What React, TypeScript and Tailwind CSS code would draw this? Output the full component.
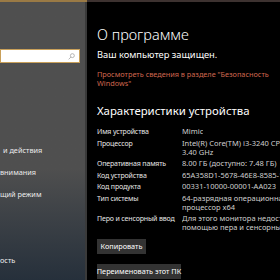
import React from "react";

const rows: { label: string; value: string[] }[] = [
  { label: "Имя устройства", value: ["Mimic"] },
  { label: "Процессор", value: ["Intel(R) Core(TM) i3-3240 CPU @ 3.40GHz", "3.40 GHz"] },
  { label: "Оперативная память", value: ["8.00 ГБ (доступно: 7.48 ГБ)"] },
  { label: "Код устройства", value: ["65A358D1-5678-46E8-8585-1614E0A2C1F3"] },
  { label: "Код продукта", value: ["00331-10000-00001-AA023"] },
  { label: "Тип системы", value: ["64-разрядная операционная система,", "процессор x64"] },
  {
    label: "Перо и сенсорный ввод",
    value: ["Для этого монитора недоступен ввод с", "помощью пера и сенсорный ввод."],
  },
];

export default function App() {
  return (
    <div className="w-[280px] h-[280px] overflow-hidden bg-black flex flex-col font-['Noto_Sans',sans-serif]">
      <div className="flex h-[2px] shrink-0">
        <div className="w-[87px] bg-[#9a7a45]" />
        <div className="flex-1 bg-[#3d3230]" />
      </div>
      <div className="flex flex-1 min-h-0">
        <aside className="w-[87px] shrink-0 overflow-hidden bg-linear-to-b from-[#4f4f4f] from-60% to-[#26303b] border-r-[2px] border-[#3a3a3a] flex flex-col">
          <div className="mt-[47px] w-[80px] h-[14px] bg-white border border-[#c9a05a] flex items-center justify-end pr-[4px]">
            <svg width="7" height="7" viewBox="0 0 16 16" fill="none" stroke="#9a9a9a" strokeWidth="1.6">
              <circle cx="10" cy="6" r="4.5" />
              <path d="M6.8 9.2 L1.5 14.5" />
            </svg>
          </div>
          <div className="mt-[83px] flex flex-col text-[7.3px] leading-[9px] text-[#ececec] whitespace-nowrap">
            <div className="h-[22px] pl-[3px]">и действия</div>
            <div className="h-[22px]">внимания</div>
            <div className="h-[22px]">щий режим</div>
            <div className="h-[22px]" />
            <div className="h-[22px]" />
            <div className="h-[22px]">ость</div>
          </div>
        </aside>
        <main className="flex-1 min-w-0 overflow-hidden pl-[10px] pt-[22px] whitespace-nowrap">
          <div className="text-[14.5px] leading-[20px] text-white font-light">О программе</div>
          <div className="mt-[5px] text-[9.3px] leading-[12px] text-white">Ваш компьютер защищен.</div>
          <div className="mt-[9px] text-[7.3px] leading-[9px] text-[#d0674f]">
            <div>Просмотреть сведения в разделе "Безопасность</div>
            <div>Windows"</div>
          </div>
          <div className="mt-[15px] text-[11.4px] leading-[16px] text-white">Характеристики устройства</div>
          <div className="mt-[8px] flex flex-col gap-y-[2.5px] leading-[9px]">
            {rows.map((r) => (
              <div key={r.label} className="flex">
                <div className="w-[85px] shrink-0 text-[7px] tracking-[-0.15px] text-[#e6e6e6]">{r.label}</div>
                <div className="min-w-0 overflow-hidden text-[7.5px] text-[#cfcfcf]">
                  {r.value.map((v) => (
                    <div key={v}>{v}</div>
                  ))}
                </div>
              </div>
            ))}
          </div>
          <div className="mt-[7px] flex flex-col items-start gap-[10px]">
            <div className="h-[15px] w-[49px] bg-[#333333] text-[7.3px] text-white flex items-center justify-center">
              Копировать
            </div>
            <div className="h-[15px] w-[84px] bg-[#333333] text-[7.3px] text-white flex items-center justify-center">
              Переименовать этот ПК
            </div>
          </div>
        </main>
      </div>
    </div>
  );
}
